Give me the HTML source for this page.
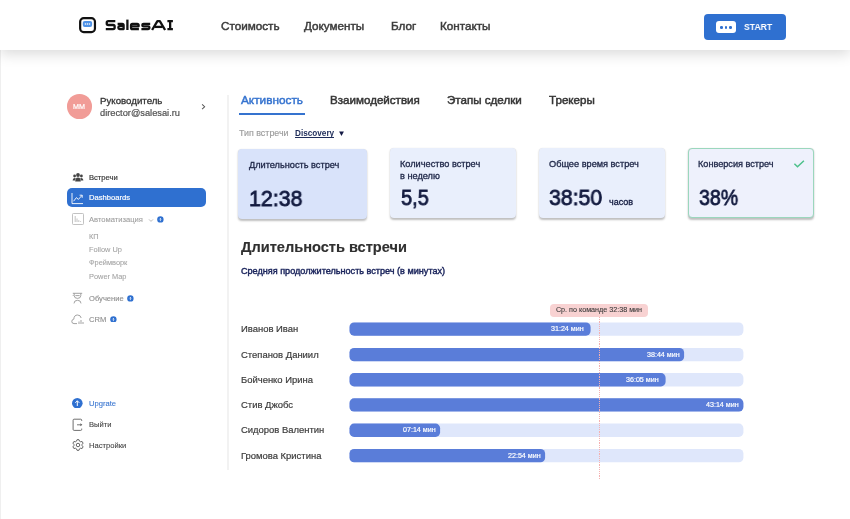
<!DOCTYPE html>
<html><head><meta charset="utf-8"><style>
html,body{margin:0;padding:0;width:850px;height:519px;overflow:hidden;background:#fff;}
body{position:relative;font-family:"Liberation Sans",sans-serif;}
.t{position:absolute;line-height:1;white-space:nowrap;will-change:transform;}
.r{position:absolute;}
</style></head><body>
<div class="r" style="left:0.00px;top:0.00px;width:1.30px;height:519.00px;background:#efefef;"></div>
<div class="r" style="left:0.00px;top:0.00px;width:850.00px;height:50.00px;background:#fff;box-shadow:0 4px 13px rgba(0,0,0,0.15);z-index:2;"></div>
<svg class="r" style="left:75px;top:13px;z-index:3" width="25" height="25" viewBox="75 13 25 25"><rect x="80.15" y="18.15" width="14.8" height="14.0" rx="3.6" fill="#fff" stroke="#111" stroke-width="2.2"/><rect x="82.8" y="20.9" width="9.3" height="6.1" rx="1.9" fill="#4f92e6"/><circle cx="85.4" cy="24.0" r="0.8" fill="#fff"/><circle cx="87.45" cy="24.0" r="0.8" fill="#fff"/><circle cx="89.5" cy="24.0" r="0.8" fill="#fff"/></svg>
<svg class="r" style="left:100px;top:14px;z-index:3" width="80" height="22" viewBox="100 14 80 22">
<g fill="none" stroke="#111" stroke-width="2.3" stroke-linejoin="round">
<path d="M115.3 21.05 H108.3 Q106.75 21.05 106.75 22.6 V23.45 Q106.75 25 108.3 25 H113.1 Q114.65 25 114.65 26.55 V27.5 Q114.65 29.05 113.1 29.05 H105.8"/>
<path d="M117.6 23.85 H122.2 Q123.6 23.85 123.6 25.25 V29.05 H119.6 Q118.35 29.05 118.35 27.8 V27.45 Q118.35 26.2 119.6 26.2 H123.6"/>
<path d="M127.4 19.6 V30"/>
<path d="M131.05 26.3 H138.6 V25.25 Q138.6 23.85 137.2 23.85 H132.45 Q131.05 23.85 131.05 25.25 V27.65 Q131.05 29.05 132.45 29.05 H138.9"/>
<path d="M150.2 23.85 H143.6 Q142.35 23.85 142.35 25.1 V25.2 Q142.35 26.45 143.6 26.45 H148.2 Q149.45 26.45 149.45 27.7 V27.8 Q149.45 29.05 148.2 29.05 H141.4"/>
<path d="M152.1 30 L157.4 21.05 H159.8 L165.1 30"/>
<path d="M154.6 26.9 H162.6"/>
<path d="M170.15 21 V29.1 M167.4 21.05 H172.9 M167.4 29.05 H172.9"/>
</g></svg>
<div class="t" style="left:221.00px;top:19.50px;font-size:11.7px;color:#3c3c3c;font-weight:400;-webkit-text-stroke:0.48px #3c3c3c;z-index:3;">Стоимость</div>
<div class="t" style="left:304.30px;top:19.50px;font-size:11.7px;color:#3c3c3c;font-weight:400;-webkit-text-stroke:0.48px #3c3c3c;z-index:3;">Документы</div>
<div class="t" style="left:391.00px;top:19.50px;font-size:11.7px;color:#3c3c3c;font-weight:400;-webkit-text-stroke:0.48px #3c3c3c;z-index:3;">Блог</div>
<div class="t" style="left:439.60px;top:19.50px;font-size:11.7px;color:#3c3c3c;font-weight:400;-webkit-text-stroke:0.48px #3c3c3c;z-index:3;">Контакты</div>
<div class="r" style="left:704.20px;top:14.30px;width:81.80px;height:25.60px;background:#2f70d0;border-radius:4px;z-index:3;"></div>
<div class="r" style="left:716.30px;top:21.20px;width:19.30px;height:12.00px;background:#fff;border-radius:3px;z-index:3;"></div>
<div class="r" style="left:720.15px;top:26.05px;width:2.50px;height:2.50px;background:#2f70d0;border-radius:50%;z-index:3;"></div>
<div class="r" style="left:724.85px;top:26.05px;width:2.50px;height:2.50px;background:#2f70d0;border-radius:50%;z-index:3;"></div>
<div class="r" style="left:729.45px;top:26.05px;width:2.50px;height:2.50px;background:#2f70d0;border-radius:50%;z-index:3;"></div>
<div class="t" style="left:744.10px;top:22.02px;font-size:9.9px;color:#fff;font-weight:700;transform:scaleX(0.875);transform-origin:0 0;z-index:3;">START</div>
<div class="r" style="left:67.00px;top:94.30px;width:24.50px;height:24.60px;background:#f19c97;border-radius:50%;"></div>
<div class="t" style="left:79.30px;top:103.28px;font-size:7.2px;color:#fff;font-weight:400;-webkit-text-stroke:0.2px #fff;transform:translateX(-50%);">MM</div>
<div class="t" style="left:99.90px;top:96.49px;font-size:9.7px;color:#333;font-weight:400;-webkit-text-stroke:0.3px #333;">Руководитель</div>
<div class="t" style="left:99.90px;top:108.55px;font-size:9.27px;color:#505050;font-weight:400;-webkit-text-stroke:0.2px #505050;">director@salesai.ru</div>
<svg class="r" style="left:200px;top:103px" width="8" height="9" viewBox="0 0 8 9"><path d="M2.1 1.3 L4.6 3.75 L2.1 6.2" fill="none" stroke="#555" stroke-width="1.05"/></svg>
<div class="r" style="left:227.00px;top:95.00px;width:2.00px;height:375.00px;background:#f2f2f2;"></div>
<svg class="r" style="left:72px;top:172px" width="12" height="11" viewBox="0 0 12 11"><circle cx="6" cy="3" r="1.9" fill="#444"/><circle cx="2.6" cy="4" r="1.4" fill="#444"/><circle cx="9.4" cy="4" r="1.4" fill="#444"/><path d="M3.2 9.5 Q3.2 5.6 6 5.6 Q8.8 5.6 8.8 9.5 Z" fill="#444"/><path d="M0.6 8.6 Q0.6 6 2.6 6 Q3.6 6 3.9 6.6 Q3 7.6 3 8.6 Z" fill="#444"/><path d="M11.4 8.6 Q11.4 6 9.4 6 Q8.4 6 8.1 6.6 Q9 7.6 9 8.6 Z" fill="#444"/></svg>
<div class="t" style="left:88.80px;top:174.38px;font-size:7.6px;color:#3a3a3a;font-weight:400;-webkit-text-stroke:0.2px #3a3a3a;">Встречи</div>
<div class="r" style="left:67.00px;top:188.00px;width:138.80px;height:19.40px;background:#2f70d0;border-radius:5px;"></div>
<svg class="r" style="left:71px;top:192px" width="13" height="13" viewBox="0 0 13 13"><path d="M1 1 V11.6 H12" fill="none" stroke="#fff" stroke-width="0.9"/><path d="M2.6 9.2 L5.4 5.6 L7.4 7.4 L11 3.4 M8.6 3.2 H11.2 V5.8" fill="none" stroke="#fff" stroke-width="0.9"/></svg>
<div class="t" style="left:88.80px;top:193.78px;font-size:7.6px;color:#fff;font-weight:400;-webkit-text-stroke:0.18px #fff;">Dashboards</div>
<svg class="r" style="left:72px;top:213px" width="12" height="12" viewBox="0 0 12 12"><rect x="0.5" y="0.5" width="11" height="11" rx="0.8" fill="none" stroke="#bbb" stroke-width="0.9"/><path d="M3.2 3 V9 M5 5.5 V9 M6.8 7.2 V9 M8.6 8.2 V9" stroke="#bbb" stroke-width="0.9"/></svg>
<div class="t" style="left:88.80px;top:216.38px;font-size:7.6px;color:#a0a0a0;font-weight:400;-webkit-text-stroke:0.1px #a0a0a0;">Автоматизация</div>
<svg class="r" style="left:148px;top:217.5px" width="6" height="5" viewBox="0 0 6 5"><path d="M1 1.4 L3 3.4 L5 1.4" fill="none" stroke="#aaa" stroke-width="0.8"/></svg>
<svg class="r" style="left:157.20px;top:216.40px" width="6.8" height="6.8" viewBox="0 0 6.8 6.8"><circle cx="3.4" cy="3.4" r="3.2" fill="#2f70d0"/><path d="M3.4 5.1 V2.5 M2.5 3.3 L3.4 2.4 L4.3 3.3" fill="none" stroke="#fff" stroke-width="0.7"/></svg>
<div class="t" style="left:88.90px;top:232.98px;font-size:7.4px;color:#a3a3a3;font-weight:400;-webkit-text-stroke:0.08px #a3a3a3;">КП</div>
<div class="t" style="left:88.90px;top:245.98px;font-size:7.4px;color:#a3a3a3;font-weight:400;-webkit-text-stroke:0.08px #a3a3a3;">Follow Up</div>
<div class="t" style="left:88.90px;top:259.38px;font-size:7.4px;color:#a3a3a3;font-weight:400;-webkit-text-stroke:0.08px #a3a3a3;">Фреймворк</div>
<div class="t" style="left:88.90px;top:273.08px;font-size:7.4px;color:#a3a3a3;font-weight:400;-webkit-text-stroke:0.08px #a3a3a3;">Power Map</div>
<svg class="r" style="left:72px;top:292px" width="11" height="12" viewBox="0 0 11 12"><path d="M0.8 1.3 H10.2 M2.2 1.3 V3.6 Q2.2 6.4 5.5 6.4 Q8.8 6.4 8.8 3.6 V1.3 M1.2 3.2 V4 M3.4 3.6 H7.6 M2 11.4 Q2 8.3 5.5 8.3 Q9 8.3 9 11.4" fill="none" stroke="#999" stroke-width="0.9"/></svg>
<div class="t" style="left:88.80px;top:295.08px;font-size:7.6px;color:#8e8e8e;font-weight:400;-webkit-text-stroke:0.12px #8e8e8e;">Обучение</div>
<svg class="r" style="left:127.40px;top:295.10px" width="6.8" height="6.8" viewBox="0 0 6.8 6.8"><circle cx="3.4" cy="3.4" r="3.2" fill="#2f70d0"/><path d="M3.4 5.1 V2.5 M2.5 3.3 L3.4 2.4 L4.3 3.3" fill="none" stroke="#fff" stroke-width="0.7"/></svg>
<svg class="r" style="left:71px;top:313px" width="14" height="12" viewBox="0 0 14 12"><path d="M6 10.6 H3 Q0.8 10.6 0.8 8.4 Q0.8 6.4 2.8 6.2 Q3 2 6.6 2 Q9.6 2 10.2 5" fill="none" stroke="#999" stroke-width="0.9"/><path d="M8 11 V8.5 M10 11 V7 M12 11 V9" stroke="#999" stroke-width="0.9"/></svg>
<div class="t" style="left:88.80px;top:315.88px;font-size:7.6px;color:#8e8e8e;font-weight:400;-webkit-text-stroke:0.12px #8e8e8e;">CRM</div>
<svg class="r" style="left:110.20px;top:315.70px" width="6.8" height="6.8" viewBox="0 0 6.8 6.8"><circle cx="3.4" cy="3.4" r="3.2" fill="#2f70d0"/><path d="M3.4 5.1 V2.5 M2.5 3.3 L3.4 2.4 L4.3 3.3" fill="none" stroke="#fff" stroke-width="0.7"/></svg>
<svg class="r" style="left:72.3px;top:397.8px" width="10.6" height="10.6" viewBox="0 0 10.6 10.6"><circle cx="5.3" cy="5.3" r="5.3" fill="#2f70d0"/><path d="M5.3 8 V2.8 M3.3 4.8 L5.3 2.8 L7.3 4.8" fill="none" stroke="#fff" stroke-width="1"/></svg>
<div class="t" style="left:89.00px;top:400.28px;font-size:7.6px;color:#3a76d0;font-weight:400;-webkit-text-stroke:0.1px #3a76d0;">Upgrate</div>
<svg class="r" style="left:72px;top:417.6px" width="11" height="13" viewBox="0 0 11 13"><path d="M9.7 3 V2.2 Q9.7 1.2 8.7 1.2 H2.1 Q1.1 1.2 1.1 2.2 V11.4 Q1.1 12.4 2.1 12.4 H8.7 Q9.7 12.4 9.7 11.4 V10.6" fill="none" stroke="#666" stroke-width="0.95"/><path d="M5 6.8 H8.6" fill="none" stroke="#777" stroke-width="1"/><path d="M8.4 5.3 L10.3 6.8 L8.4 8.3 Z" fill="#555"/></svg>
<div class="t" style="left:88.80px;top:420.78px;font-size:7.6px;color:#444;font-weight:400;-webkit-text-stroke:0.1px #444;">Выйти</div>
<svg class="r" style="left:71.6px;top:439px" width="12" height="12" viewBox="0 0 12 12"><path d="M4.46 2.20 L5.06 0.68 L6.94 0.68 L7.54 2.20 L8.52 2.77 L10.14 2.53 L11.07 4.15 L10.06 5.43 L10.06 6.57 L11.07 7.85 L10.14 9.47 L8.52 9.23 L7.54 9.80 L6.94 11.32 L5.06 11.32 L4.46 9.80 L3.48 9.23 L1.86 9.47 L0.93 7.85 L1.94 6.57 L1.94 5.43 L0.93 4.15 L1.86 2.53 L3.48 2.77 Z" fill="none" stroke="#555" stroke-width="0.9" stroke-linejoin="round"/><circle cx="6" cy="6" r="1.75" fill="none" stroke="#555" stroke-width="0.9"/></svg>
<div class="t" style="left:88.80px;top:442.08px;font-size:7.6px;color:#444;font-weight:400;-webkit-text-stroke:0.1px #444;">Настройки</div>
<div class="t" style="left:241.00px;top:94.81px;font-size:11.8px;color:#3573cf;font-weight:400;-webkit-text-stroke:0.45px #3573cf;">Активность</div>
<div class="r" style="left:238.60px;top:113.20px;width:66.40px;height:2.00px;background:#3573cf;"></div>
<div class="t" style="left:330.20px;top:94.48px;font-size:11.6px;color:#363636;font-weight:400;-webkit-text-stroke:0.5px #363636;">Взаимодействия</div>
<div class="t" style="left:447.00px;top:94.48px;font-size:11.6px;color:#363636;font-weight:400;-webkit-text-stroke:0.5px #363636;">Этапы сделки</div>
<div class="t" style="left:548.50px;top:94.48px;font-size:11.6px;color:#363636;font-weight:400;-webkit-text-stroke:0.5px #363636;">Трекеры</div>
<div class="t" style="left:239.10px;top:128.77px;font-size:8.9px;color:#9c9c9c;font-weight:400;-webkit-text-stroke:0.15px #9c9c9c;">Тип встречи</div>
<div class="t" style="left:294.60px;top:129.56px;font-size:8.2px;color:#1f2d5a;font-weight:700;">Discovery</div>
<div class="r" style="left:294.60px;top:137.00px;width:39.10px;height:1.00px;background:#1f2d5a;"></div>
<svg class="r" style="left:339px;top:131px" width="5" height="6" viewBox="0 0 5 6"><path d="M0.1 0.6 H4.9 L2.5 4.9 Z" fill="#141a45"/></svg>
<div class="r" style="left:238.00px;top:149.00px;width:129.00px;height:70.00px;background:#d9e3fa;border-radius:4px;box-shadow:0 1.6px 2px rgba(0,0,0,0.25),0 0 1px rgba(0,0,0,0.1);"></div>
<div class="r" style="left:390.00px;top:148.00px;width:126.00px;height:70.00px;background:#e9effc;border-radius:4px;box-shadow:0 1.6px 2px rgba(0,0,0,0.25),0 0 1px rgba(0,0,0,0.1);"></div>
<div class="r" style="left:539.00px;top:148.00px;width:126.00px;height:70.00px;background:#e9effc;border-radius:4px;box-shadow:0 1.6px 2px rgba(0,0,0,0.25),0 0 1px rgba(0,0,0,0.1);"></div>
<div class="r" style="left:688.00px;top:148.00px;width:126.00px;height:70.00px;background:#eef1fc;border-radius:4px;box-shadow:0 1.6px 2px rgba(0,0,0,0.25),0 0 1px rgba(0,0,0,0.1);border:1px solid #9bd7bd;box-sizing:border-box;"></div>
<div class="t" style="left:248.50px;top:161.21px;font-size:9.2px;color:#1f2748;font-weight:400;-webkit-text-stroke:0.32px #1f2748;">Длительность встреч</div>
<div class="t" style="left:249.00px;top:187.65px;font-size:22.5px;color:#121a3f;font-weight:400;-webkit-text-stroke:0.8px #121a3f;transform:scaleX(0.95);transform-origin:0 0;">12:38</div>
<div class="t" style="left:399.90px;top:160.21px;font-size:9.2px;color:#1f2748;font-weight:400;-webkit-text-stroke:0.32px #1f2748;">Количество встреч</div>
<div class="t" style="left:399.90px;top:171.81px;font-size:9.2px;color:#1f2748;font-weight:400;-webkit-text-stroke:0.32px #1f2748;">в неделю</div>
<div class="t" style="left:401.00px;top:186.95px;font-size:22.5px;color:#121a3f;font-weight:400;-webkit-text-stroke:0.8px #121a3f;transform:scaleX(0.89);transform-origin:0 0;">5,5</div>
<div class="t" style="left:549.00px;top:160.31px;font-size:9.2px;color:#1f2748;font-weight:400;-webkit-text-stroke:0.32px #1f2748;">Общее время встреч</div>
<div class="t" style="left:549.20px;top:186.55px;font-size:22.5px;color:#121a3f;font-weight:400;-webkit-text-stroke:0.8px #121a3f;transform:scaleX(0.945);transform-origin:0 0;">38:50</div>
<div class="t" style="left:608.70px;top:197.88px;font-size:9.0px;color:#121a3f;font-weight:400;-webkit-text-stroke:0.3px #121a3f;">часов</div>
<div class="t" style="left:698.10px;top:160.45px;font-size:9.15px;color:#1f2748;font-weight:400;-webkit-text-stroke:0.32px #1f2748;">Конверсия встреч</div>
<div class="t" style="left:698.60px;top:186.95px;font-size:22.5px;color:#121a3f;font-weight:400;-webkit-text-stroke:0.8px #121a3f;transform:scaleX(0.87);transform-origin:0 0;">38%</div>
<svg class="r" style="left:793px;top:158.5px" width="13" height="10" viewBox="0 0 13 10"><path d="M1.4 4.8 L4.5 7.7 L10.9 1.7" fill="none" stroke="#4cc08a" stroke-width="1.5"/></svg>
<div class="t" style="left:240.80px;top:239.84px;font-size:14.6px;color:#303030;font-weight:700;-webkit-text-stroke:0.15px #303030;">Длительность встречи</div>
<div class="t" style="left:240.80px;top:266.80px;font-size:9.1px;color:#18225a;font-weight:400;-webkit-text-stroke:0.42px #18225a;">Средняя продолжительность встреч (в минутах)</div>
<svg class="r" style="left:0;top:0" width="850" height="519"><rect x="349.5" y="322.40" width="393.90" height="13.3" rx="4.6" fill="#dfe7fb"/><rect x="349.5" y="322.40" width="241.10" height="13.3" rx="4.6" fill="#5a7dd9"/><rect x="349.5" y="348.00" width="393.90" height="13.3" rx="4.6" fill="#dfe7fb"/><rect x="349.5" y="348.00" width="334.60" height="13.3" rx="4.6" fill="#5a7dd9"/><rect x="349.5" y="373.10" width="393.90" height="13.3" rx="4.6" fill="#dfe7fb"/><rect x="349.5" y="373.10" width="316.10" height="13.3" rx="4.6" fill="#5a7dd9"/><rect x="349.5" y="398.30" width="393.90" height="13.3" rx="4.6" fill="#dfe7fb"/><rect x="349.5" y="398.30" width="393.90" height="13.3" rx="4.6" fill="#5a7dd9"/><rect x="349.5" y="423.60" width="393.90" height="13.3" rx="4.6" fill="#dfe7fb"/><rect x="349.5" y="423.60" width="90.60" height="13.3" rx="4.6" fill="#5a7dd9"/><rect x="349.5" y="449.00" width="393.90" height="13.3" rx="4.6" fill="#dfe7fb"/><rect x="349.5" y="449.00" width="195.60" height="13.3" rx="4.6" fill="#5a7dd9"/></svg>
<div class="t" style="left:240.90px;top:324.40px;font-size:9.45px;color:#3d3d3d;font-weight:400;-webkit-text-stroke:0.2px #3d3d3d;">Иванов Иван</div>
<div class="t" style="right:266.80px;top:326.06px;font-size:7.14px;color:#fff;font-weight:400;-webkit-text-stroke:0.18px #fff;">31:24 мин</div>
<div class="t" style="left:240.90px;top:349.60px;font-size:9.45px;color:#3d3d3d;font-weight:400;-webkit-text-stroke:0.2px #3d3d3d;">Степанов Даниил</div>
<div class="t" style="right:170.80px;top:351.66px;font-size:7.14px;color:#fff;font-weight:400;-webkit-text-stroke:0.18px #fff;">38:44 мин</div>
<div class="t" style="left:240.90px;top:374.70px;font-size:9.45px;color:#3d3d3d;font-weight:400;-webkit-text-stroke:0.2px #3d3d3d;">Бойченко Ирина</div>
<div class="t" style="right:191.20px;top:376.76px;font-size:7.14px;color:#fff;font-weight:400;-webkit-text-stroke:0.18px #fff;">36:05 мин</div>
<div class="t" style="left:240.90px;top:399.60px;font-size:9.45px;color:#3d3d3d;font-weight:400;-webkit-text-stroke:0.2px #3d3d3d;">Стив Джобс</div>
<div class="t" style="right:110.90px;top:401.96px;font-size:7.14px;color:#fff;font-weight:400;-webkit-text-stroke:0.18px #fff;">43:14 мин</div>
<div class="t" style="left:240.90px;top:424.70px;font-size:9.45px;color:#3d3d3d;font-weight:400;-webkit-text-stroke:0.2px #3d3d3d;">Сидоров Валентин</div>
<div class="t" style="right:414.50px;top:427.26px;font-size:7.14px;color:#fff;font-weight:400;-webkit-text-stroke:0.18px #fff;">07:14 мин</div>
<div class="t" style="left:240.90px;top:450.70px;font-size:9.45px;color:#3d3d3d;font-weight:400;-webkit-text-stroke:0.2px #3d3d3d;">Громова Кристина</div>
<div class="t" style="right:309.20px;top:452.66px;font-size:7.14px;color:#fff;font-weight:400;-webkit-text-stroke:0.18px #fff;">22:54 мин</div>
<div class="r" style="left:599.2px;top:316.5px;width:1px;height:163px;background:repeating-linear-gradient(to bottom,#f5b0b0 0,#f5b0b0 1.2px,transparent 1.2px,transparent 2.2px);z-index:1"></div>
<div class="r" style="left:549.80px;top:303.50px;width:98.60px;height:13.30px;background:#f8d2d2;border-radius:4px;"></div>
<div class="t" style="left:599.10px;top:306.82px;font-size:7.18px;color:#3a3a3a;font-weight:400;-webkit-text-stroke:0.1px #3a3a3a;transform:translateX(-50%);">Ср. по команде 32:38 мин</div>
</body></html>
